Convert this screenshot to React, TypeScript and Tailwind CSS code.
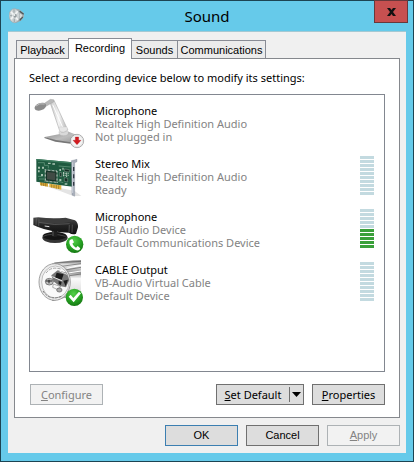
import React, { useState } from "react";

function BadgeDefs() {
  return (
    <svg width="0" height="0" className="absolute" aria-hidden="true">
      <defs>
        <radialGradient id="greenBadge" cx="0.45" cy="0.3" r="0.75">
          <stop offset="0" stopColor="#55cf4a" />
          <stop offset="0.55" stopColor="#27a323" />
          <stop offset="1" stopColor="#12700f" />
        </radialGradient>
        <linearGradient id="metal" x1="0" y1="0" x2="1" y2="1">
          <stop offset="0" stopColor="#8d8d8d" />
          <stop offset="0.5" stopColor="#bdbdbd" />
          <stop offset="1" stopColor="#8f8f8f" />
        </linearGradient>
        <linearGradient id="stick" x1="0" y1="0" x2="1" y2="0">
          <stop offset="0" stopColor="#c4c4c4" />
          <stop offset="0.5" stopColor="#f4f4f4" />
          <stop offset="1" stopColor="#b5b5b5" />
        </linearGradient>
        <linearGradient id="black" x1="0" y1="0" x2="0" y2="1">
          <stop offset="0" stopColor="#4a4a4a" />
          <stop offset="0.5" stopColor="#222222" />
          <stop offset="1" stopColor="#111111" />
        </linearGradient>
        <linearGradient id="tube" x1="0" y1="0" x2="0" y2="1">
          <stop offset="0" stopColor="#777777" />
          <stop offset="0.12" stopColor="#eeeeee" />
          <stop offset="0.3" stopColor="#999999" />
          <stop offset="0.45" stopColor="#fafafa" />
          <stop offset="0.8" stopColor="#dddddd" />
          <stop offset="1" stopColor="#777777" />
        </linearGradient>
      </defs>
    </svg>
  );
}

function DeskMicIcon() {
  return (
    <svg viewBox="27 24 159 159" className="size-[53px] shrink-0" aria-hidden="true">
      <path d="M62 141 L104 133 L134 125 L172 140 L170 160 L128 159 L96 152 Z" fill="url(#metal)" />
      <path d="M62 141 L96 150 L140 157 L140 161 L94 155 L61 144 Z" fill="#777" />
      <ellipse cx="119" cy="128" rx="14" ry="9" fill="#d9d9d9" stroke="#aaa" />
      <path d="M77 34 L90 31 L131 119 Q128 127 113 127 L107 122 Z" fill="url(#stick)" stroke="#b0b0b0" strokeWidth="2" />
      <path d="M86 44 L119 119" stroke="#fff" strokeWidth="3" />
      <path d="M106 111 L129 111 L130 121 Q119 130 107 123 Z" fill="#e6e6e6" stroke="#c5c5c5" />
      <path d="M58 42 L79 28 L89 29 L90 35 L64 50 Z" fill="#b9b9b9" stroke="#999" />
      <ellipse cx="49" cy="50" rx="18" ry="11" transform="rotate(-20 49 50)" fill="#8b8b8b" />
      <path d="M36 48 Q46 38 62 42" stroke="#c0c0c0" strokeWidth="3" fill="none" />
      <circle cx="159" cy="153" r="20" fill="#f5f5f5" stroke="#888" strokeWidth="2" />
      <circle cx="159" cy="153" r="17" fill="none" stroke="#ddd" strokeWidth="2" />
      <path d="M154 141 H164 V151 H171 L159 164 L147 151 H154 Z" fill="#d31a1f" stroke="#a31519" />
    </svg>
  );
}

function SoundCardIcon() {
  return (
    <svg viewBox="27 183 159 159" className="size-[53px] shrink-0" aria-hidden="true">
      <path d="M40 280 L110 304 L147 318 L172 318 L152 303 Z" fill="#e4e4e4" />
      <path d="M48 276 L72 280 L72 290 L48 286 Z" fill="#d6a83a" />
      <path d="M76 281 L112 286 L112 299 L76 291 Z" fill="#e0b443" />
      <path d="M53 277 V287 M59 278 V288 M65 279 V289 M83 283 V293 M90 284 V294 M97 285 V296 M104 286 V297" stroke="#8e6a1d" strokeWidth="2" />
      <path d="M37 207 L146 217 V290 L112 286 L37 275 Z" fill="#1f5a40" />
      <path d="M37 207 L146 217 V221 L37 211 Z" fill="#3f7e60" />
      <path d="M42 218 H61 V226 H73 V235 M42 259 H56 M45 267 H60 M104 228 L140 231 M103 274 L118 278" stroke="#6fa186" strokeWidth="2" fill="none" />
      <g fill="#a9c3b2">
        <path d="M42 230 H48 V236 H42 Z M42 241 H47 V247 H42 Z M54 230 H60 V236 H54 Z M51 252 H57 V258 H51 Z M72 218 H80 V222 H72 Z M85 220 H93 V224 H85 Z M106 237 H111 V243 H106 Z M115 233 H119 V239 H115 Z M106 267 H112 V273 H106 Z M122 280 H130 V284 H122 Z" />
      </g>
      <path d="M64 240 L99 243 V277 L64 273 Z" fill="#143427" stroke="#d3ddd5" strokeWidth="4" strokeDasharray="2 2" />
      <path d="M69 246 L94 248 V271 L69 268 Z" fill="#414b45" />
      <path d="M107 247 L113 248 V260 L107 259 Z M121 237 L136 239 V246 L121 244 Z M121 263 L131 265 V276 L121 274 Z" fill="#142e24" stroke="#bfcfc4" />
      <path d="M117 250 H134 M117 256 H134 M119 246 V260 M128 248 V262" stroke="#c5d4c9" strokeWidth="3" strokeDasharray="3 2" />
      <path d="M142 212 L159 208 V215 L152 218 V319 L144 315 Z" fill="#a8aeba" stroke="#77808f" />
      <path d="M146 217 V309" stroke="#e1e5ed" strokeWidth="2" />
      <path d="M149 231 V243 M149 253 V265 M149 276 V287" stroke="#333945" strokeWidth="4" />
    </svg>
  );
}

function ArrayMicIcon() {
  return (
    <svg viewBox="27 12 159 159" className="size-[53px] shrink-0" aria-hidden="true">
      <ellipse cx="93" cy="113" rx="38" ry="16" fill="#343434" />
      <ellipse cx="92" cy="108" rx="36" ry="12" fill="#151515" />
      <path d="M57 109 Q83 97 125 109" stroke="#5d5d5d" strokeWidth="2" fill="none" />
      <path d="M84 86 H99 L101 108 Q91 114 83 107 Z" fill="#202020" />
      <path d="M87 88 V108" stroke="#777" strokeWidth="2" />
      <path d="M28 53 L43 52 Q86 57 125 53 L153 61 Q163 68 162 82 L156 101 Q146 106 135 98 Q82 97 40 80 L28 75 Z" fill="url(#black)" />
      <path d="M46 54 Q86 60 123 55 L149 62 Q106 76 45 68 Z" fill="#3d3d3d" />
      <path d="M44 67 Q91 78 137 71" stroke="#666" strokeWidth="2" fill="none" />
      <path d="M37 55 L36 76 M45 58 L44 79 M136 75 L135 96 M145 74 L144 98" stroke="#656565" strokeWidth="2" />
      <path d="M62 78 L76 80" stroke="#ddd" strokeWidth="3" />
      <circle cx="152" cy="133" r="26" fill="url(#greenBadge)" />
      <path d="M139 119 L145 117 L150 127 L145 131 Q149 139 156 143 L161 138 L169 145 L166 150 Q159 154 149 147 Q135 136 136 125 Q136 121 139 119 Z" fill="#fff" />
    </svg>
  );
}

function CableIcon() {
  return (
    <svg viewBox="27 171 159 159" className="size-[53px] shrink-0" aria-hidden="true">
      <path d="M84 190 Q120 182 171 181 V286 L120 294 L85 303 Z" fill="url(#tube)" />
      <path d="M91 189 L171 184 M112 199 L171 191 M123 210 L171 202 M130 228 L171 222" stroke="#5a5a5a" strokeWidth="2" />
      <path d="M128 205 L171 196 M132 219 L171 213" stroke="#fff" strokeWidth="3" />
      <ellipse cx="92" cy="246" rx="47" ry="55" fill="#ececec" stroke="#777" strokeWidth="2" />
      <ellipse cx="94" cy="246" rx="41" ry="48" fill="#f9f9f9" stroke="#a5a5a5" strokeWidth="2" />
      <path d="M57 273 Q76 303 112 289" stroke="#777" strokeWidth="3" strokeDasharray="8 3" fill="none" />
      <path d="M66 219 Q82 197 113 208" stroke="#777" strokeWidth="2" strokeDasharray="10 3" fill="none" />
      <path d="M82 226 L101 211 L128 218 L136 240 L126 262 L106 258 L88 244 Z" fill="#777" />
      <path d="M98 218 L119 223 L113 239 L93 233 Z M118 242 L132 239 L125 259 Z M104 243 L113 245 L111 255 L104 252 Z" fill="#1b1b1b" />
      <path d="M106 213 L129 223 M85 230 L115 243" stroke="#e5e5e5" strokeWidth="3" />
      <ellipse cx="76" cy="245" rx="12" ry="10" fill="#bfbfbf" stroke="#555" strokeWidth="2" />
      <path d="M65 243 H85 M75 239 V250" stroke="#222" strokeWidth="3" />
      <path d="M88 252 L111 260 L99 268 L86 262 Z" fill="#f7f7f7" stroke="#888" strokeWidth="2" />
      <ellipse cx="106" cy="270" rx="8" ry="6" fill="#aaa" stroke="#555" strokeWidth="2" />
      <circle cx="151" cy="292" r="26" fill="url(#greenBadge)" />
      <path d="M134 290 L140 284 L148 294 L165 275 L171 280 L149 307 Z" fill="#fff" />
    </svg>
  );
}

function SpeakerIcon() {
  return (
    <svg viewBox="30 20 48 48" className="size-4" aria-hidden="true">
      <path d="M45 22 L60 24 L74 35 L75 46 L67 57 L57 63 L46 65 Z" fill="#a3abad" />
      <path d="M62 30 L74 39 M62 57 L71 47" stroke="#4c5659" strokeWidth="4" />
      <path d="M61 35 L70 41 L66 50 L59 49 Z" fill="#d8dddd" />
      <ellipse cx="46" cy="43" rx="16" ry="21" fill="#cdd3d5" stroke="#a2abae" strokeWidth="2" />
      <path d="M36 31 L57 56 M36 54 L56 30" stroke="#f2f4f4" strokeWidth="5" />
      <path d="M45 24 V34 M33 43 H39 M46 52 V62" stroke="#a6aeb0" strokeWidth="4" />
      <ellipse cx="48" cy="43" rx="5" ry="6" fill="#929b9e" />
      <ellipse cx="46" cy="41" rx="3" ry="3" fill="#eef1f1" />
    </svg>
  );
}

const devices = [
  { name: "Microphone", driver: "Realtek High Definition Audio", status: "Not plugged in", Icon: DeskMicIcon, level: null },
  { name: "Stereo Mix", driver: "Realtek High Definition Audio", status: "Ready", Icon: SoundCardIcon, level: 0 },
  { name: "Microphone", driver: "USB Audio Device", status: "Default Communications Device", Icon: ArrayMicIcon, level: 5 },
  { name: "CABLE Output", driver: "VB-Audio Virtual Cable", status: "Default Device", Icon: CableIcon, level: 0 },
];

const tabs = ["Playback", "Recording", "Sounds", "Communications"];

const tabWidths: Record<string, string> = {
  Playback: "w-[53px]",
  Recording: "w-16",
  Sounds: "w-[47px]",
  Communications: "w-[89px]",
};

function Meter({ level }: { level: number }) {
  return (
    <div role="meter" aria-label="Input level" aria-valuemin={0} aria-valuemax={10} aria-valuenow={level} className="mt-[5px] mr-[10px] flex w-[14px] flex-col gap-px">
      {Array.from({ length: 10 }, (_, i) => (
        <span key={i} className={`h-[3px] ${i >= 10 - level ? "bg-[#3aa03a]" : "bg-[#c3dae0]"}`} />
      ))}
    </div>
  );
}

const buttonBase = "flex h-[21px] items-center justify-center border leading-none";
const buttonNormal = "border-[#707070] bg-[#dddddd] text-black";
const buttonDisabled = "border-[#adb2b5] bg-[#f2f2f2] text-[#838383]";

export default function App() {
  const [active, setActive] = useState("Recording");
  return (
    <main className="border border-[#1c4453] bg-[#66caea] px-[7px] pb-2 font-['Noto_Sans','Open_Sans',sans-serif] text-[11px] text-black">
      <BadgeDefs />
      <header className="grid h-[30px] grid-cols-[1fr_auto_1fr] items-center">
        <span className="pl-px"><SpeakerIcon /></span>
        <h1 className="text-[15px] leading-5">Sound</h1>
        <button aria-label="Close" className="-mt-px -mr-0.5 flex h-[23px] w-[34px] items-center justify-center self-start justify-self-end border border-[#69383b] bg-[#c75050]">
          <svg viewBox="0 0 9 8" className="h-2 w-[9px]" aria-hidden="true">
            <path d="M0 0H3L4.500 2L6 0H9L6 4L9 8H6L4.500 6L3 8H0L3 4Z" fill="#111" />
          </svg>
        </button>
      </header>
      <div className="border-t border-[#a4c9d3] bg-[#f0f0f0] px-1.5 pt-1.5 pb-[7px]">
        <div role="tablist" className="flex h-5 items-end pl-0.5 font-['Liberation_Sans','Noto_Sans',sans-serif]">
          {tabs.map((tab) => (
            <button
              key={tab}
              role="tab"
              aria-selected={tab === active}
              onClick={() => setActive(tab)}
              className={`${tabWidths[tab]} -mr-px border border-b-0 border-[#898c95] pt-px text-center whitespace-nowrap ${
                tab === active ? "relative -mb-px h-[21px] bg-white pb-[3px]" : "h-[18px] bg-[#ebebeb]"
              }`}
            >
              {tab}
            </button>
          ))}
        </div>
        <section role="tabpanel" aria-label={active} className="border border-[#85888d] bg-white px-[14px] pt-3 pb-3">
          <p className="leading-[14px]">Select a recording device below to modify its settings:</p>
          <ul className="mt-[9px] min-h-[278px] border border-[#828790] pt-[3px] pl-[3px]">
            {devices.map(({ name, driver, status, Icon, level }, i) => (
              <li key={i} className="flex h-[53px] items-start">
                <Icon />
                <div className="ml-[9px] flex-1 pt-1.5 leading-[13px] text-[#838383]">
                  <p className="text-black">{name}</p>
                  <p>{driver}</p>
                  <p>{status}</p>
                </div>
                {level !== null && <Meter level={level} />}
              </li>
            ))}
          </ul>
          <div className="mt-3 flex gap-2 pl-px">
            <button disabled className={`${buttonBase} ${buttonDisabled} mr-auto w-[73px]`}>
              <span><u>C</u>onfigure</span>
            </button>
            <div className={`${buttonBase} ${buttonNormal} w-[88px]`}>
              <button className="h-full flex-1"><u>S</u>et Default</button>
              <button aria-label="Set default options" className="flex h-[15px] w-[14px] items-center justify-center border-l border-[#707070]">
                <svg viewBox="0 0 9 5" className="h-[5px] w-[9px]" aria-hidden="true">
                  <path d="M0 0H9L4.500 5Z" fill="#000" />
                </svg>
              </button>
            </div>
            <button className={`${buttonBase} ${buttonNormal} w-[73px]`}>
              <span><u>P</u>roperties</span>
            </button>
          </div>
        </section>
        <footer className="mt-[7px] flex justify-end gap-2 font-['Liberation_Sans','Noto_Sans',sans-serif]">
          <button className={`${buttonBase} w-[73px] border-[#3c7fb1] bg-[#dddddd]`}>OK</button>
          <button className={`${buttonBase} ${buttonNormal} w-[73px]`}>Cancel</button>
          <button disabled className={`${buttonBase} ${buttonDisabled} w-[73px]`}>
            <span><u>A</u>pply</span>
          </button>
        </footer>
      </div>
    </main>
  );
}
